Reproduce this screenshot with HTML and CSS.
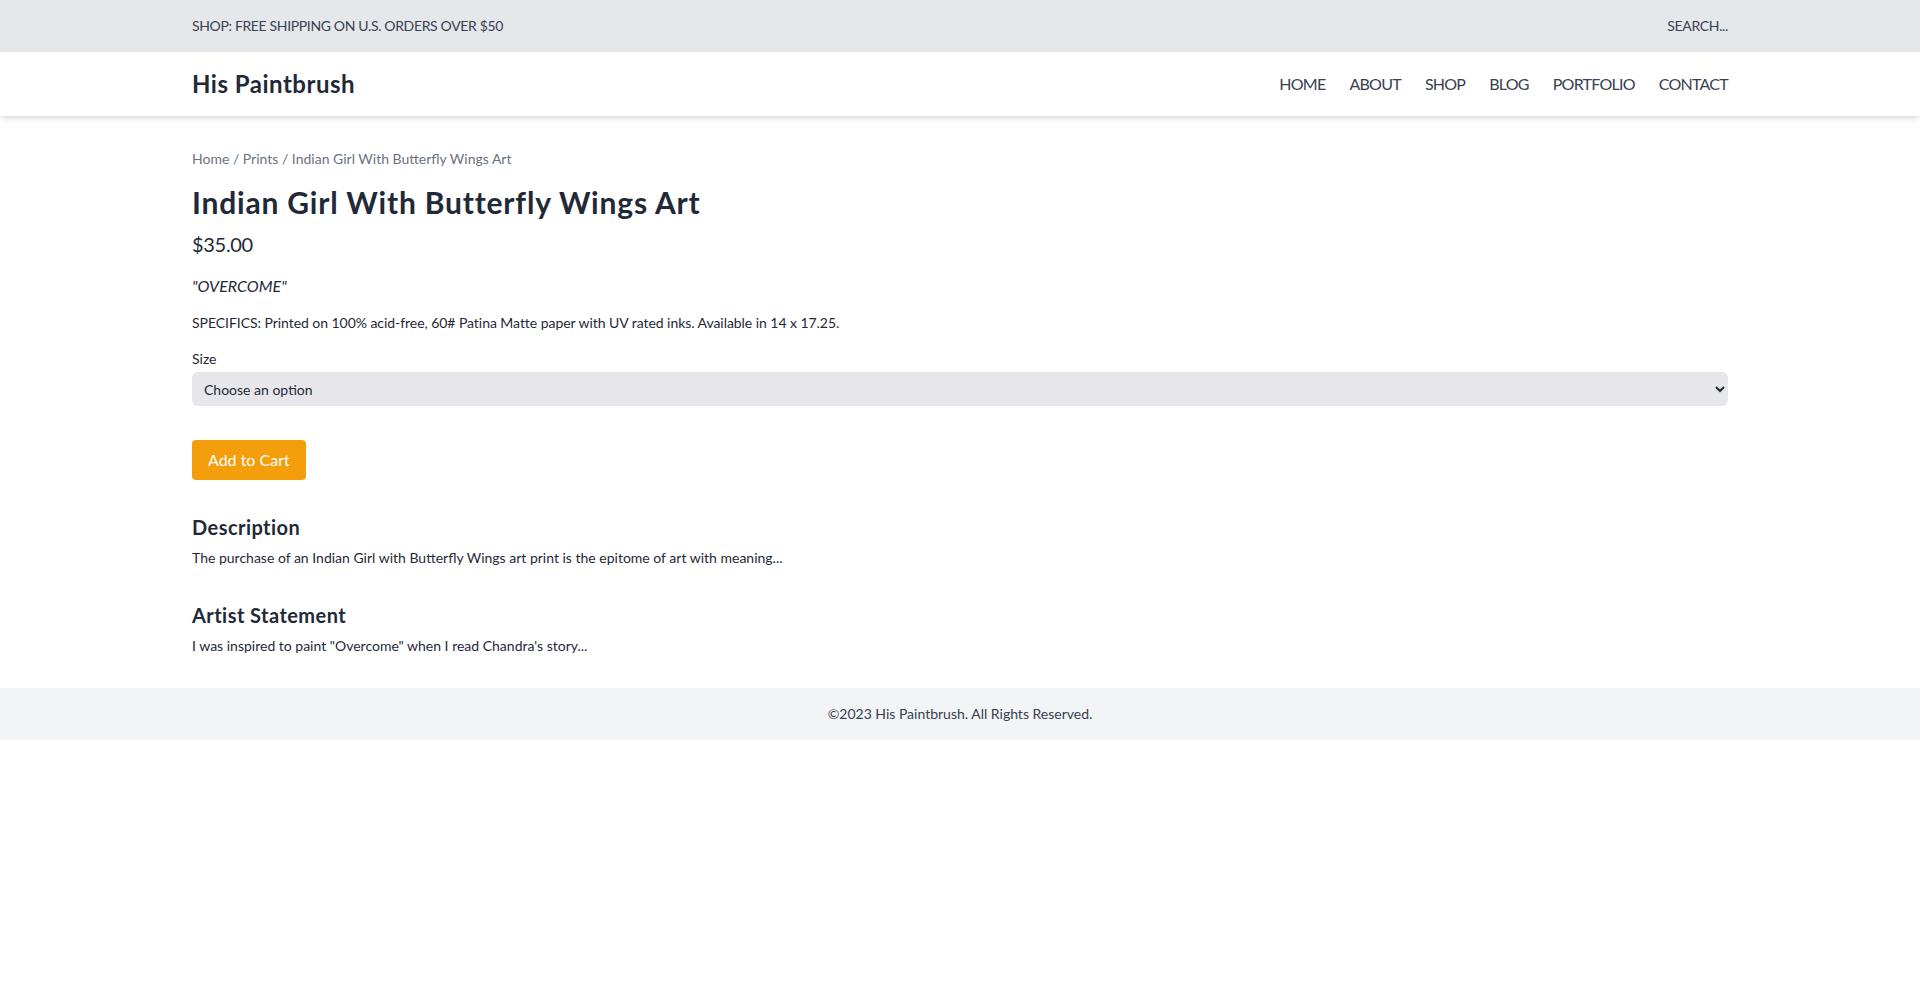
FILE: index.html
```html
<!DOCTYPE html>
<html lang="en">
<head>
<meta charset="utf-8">
<title>Indian Girl With Butterfly Wings Art - His Paintbrush</title>
<link rel="stylesheet" href="styles.css">
</head>
<body>
<div class="topbar">
  <div class="container topbar-inner">
    <span>SHOP: FREE SHIPPING ON U.S. ORDERS OVER $50</span>
    <span>SEARCH...</span>
  </div>
</div>
<header class="nav">
  <div class="container nav-inner">
    <a class="brand" href="#">His Paintbrush</a>
    <nav class="menu">
      <a href="#">HOME</a>
      <a href="#">ABOUT</a>
      <a href="#">SHOP</a>
      <a href="#">BLOG</a>
      <a href="#">PORTFOLIO</a>
      <a href="#">CONTACT</a>
    </nav>
  </div>
</header>
<main class="container main">
  <div class="crumbs"><a href="#">Home</a> / <a href="#">Prints</a> / Indian Girl With Butterfly Wings Art</div>
  <h1 class="title">Indian Girl With Butterfly Wings Art</h1>
  <div class="price">$35.00</div>
  <p class="quote">"OVERCOME"</p>
  <p class="specs">SPECIFICS: Printed on 100% acid-free, 60# Patina Matte paper with UV rated inks. Available in 14 x 17.25.</p>
  <form class="cart">
    <label class="label" for="size">Size</label>
    <select id="size" class="select">
      <option>Choose an option</option>
      <option>14 x 17.25</option>
    </select>
    <button type="button" class="btn">Add to Cart</button>
  </form>
  <section class="section">
    <h2 class="h2">Description</h2>
    <p class="text">The purchase of an Indian Girl with Butterfly Wings art print is the epitome of art with meaning...</p>
  </section>
  <section class="section">
    <h2 class="h2">Artist Statement</h2>
    <p class="text">I was inspired to paint "Overcome" when I read Chandra's story...</p>
  </section>
</main>
<footer class="footer">©2023 His Paintbrush. All Rights Reserved.</footer>
</body>
</html>
```

FILE: styles.css
```css
* { box-sizing: border-box; }
html, body { margin: 0; padding: 0; }
body {
  font-family: Lato, "Noto Sans", sans-serif;
  color: #1f2937;
  background: #fff;
}
a { color: inherit; text-decoration: none; }
p { margin: 0; }
h1, h2 { margin: 0; }

.container { width: 1536px; margin: 0 auto; }

.topbar { background: #e5e7eb; }
.topbar-inner {
  display: flex;
  justify-content: space-between;
  align-items: center;
  padding: 16px 0;
  font-size: 14px;
  line-height: 20px;
  color: #374151;
  letter-spacing: -0.35px;
}

.nav {
  background: #fff;
  box-shadow: 0 4px 6px -1px rgba(0,0,0,0.1), 0 2px 4px -2px rgba(0,0,0,0.1);
  position: relative;
}
.nav-inner {
  display: flex;
  justify-content: space-between;
  align-items: center;
  padding: 16px 0;
}
.brand {
  font-size: 24px;
  line-height: 32px;
  font-weight: 700;
  color: #1f2937;
  letter-spacing: 0.5px;
}
.menu {
  display: flex;
  gap: 24px;
  font-size: 16px;
  line-height: 24px;
  color: #374151;
  letter-spacing: -0.75px;
}

.main { padding: 33px 0 32px; }
.crumbs { font-size: 14px; line-height: 20px; color: #6b7280; }
.title {
  margin-top: 15px;
  font-size: 30px;
  line-height: 36px;
  font-weight: 700;
  color: #1f2937;
  letter-spacing: 0.8px;
}
.price { margin-top: 10px; font-size: 20px; line-height: 28px; color: #1f2937; letter-spacing: -0.3px; }
.quote { margin-top: 16px; font-size: 16px; line-height: 24px; font-style: italic; color: #1f2937; }
.specs { margin-top: 15px; font-size: 14px; line-height: 20px; color: #1f2937; letter-spacing: -0.05px; }

.cart { display: flex; flex-direction: column; align-items: flex-start; margin-top: 16px; }
.label { font-size: 14px; line-height: 20px; color: #1f2937; margin-bottom: 3px; }
.select {
  width: 100%;
  height: 34px;
  padding: 0 8px;
  border: none;
  border-radius: 6px;
  background: #e7e7eb;
  font-family: inherit;
  font-size: 14px;
  color: #1f2937;
}
.btn {
  margin-top: 34px;
  background: #f59e0b;
  color: #fff;
  border: none;
  border-radius: 4px;
  padding: 8px 16px;
  font-family: inherit;
  font-size: 16px;
  line-height: 24px;
  cursor: pointer;
}

.section { margin-top: 33px; }
.h2 { font-size: 20px; line-height: 28px; font-weight: 700; color: #1f2937; letter-spacing: 0.45px; }
.text { margin-top: 7px; font-size: 14px; line-height: 20px; color: #1f2937; }

.footer {
  background: #f3f4f6;
  text-align: center;
  padding: 16px 0;
  font-size: 14px;
  line-height: 20px;
  color: #374151;
}
```
